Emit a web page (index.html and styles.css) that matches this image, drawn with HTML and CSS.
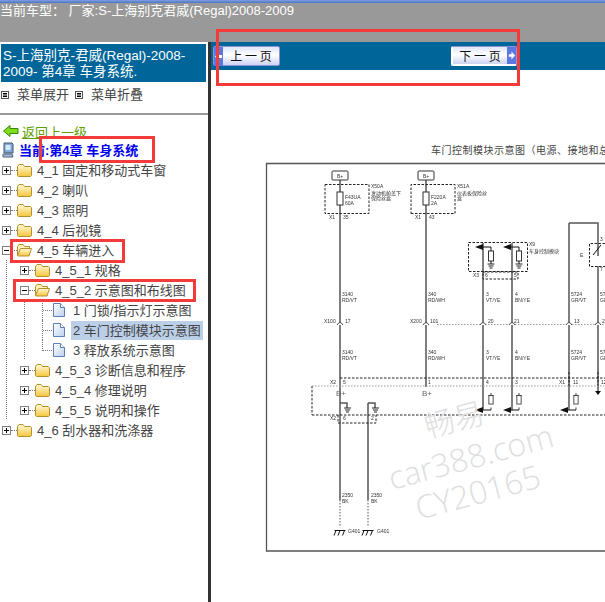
FILE: index.html
```html
<!DOCTYPE html>
<html lang="zh">
<head>
<meta charset="utf-8">
<title>车门控制模块示意图</title>
<link rel="stylesheet" href="styles.css">
</head>
<body>
<svg class="defs" width="0" height="0" aria-hidden="true">
  <defs>
    <linearGradient id="fg" x1="0" y1="0" x2="0" y2="1"><stop offset="0" stop-color="#fffbd8"/><stop offset="1" stop-color="#f4c640"/></linearGradient>
    <linearGradient id="dg" x1="0" y1="0" x2="1" y2="1"><stop offset="0" stop-color="#ffffff"/><stop offset="1" stop-color="#bcd0ee"/></linearGradient>
    <symbol id="plus" viewBox="0 0 9 9"><rect x=".5" y=".5" width="8" height="8" fill="#fff" stroke="#808080"/><path d="M2 4.5h5M4.5 2v5" stroke="#000"/></symbol>
    <symbol id="minus" viewBox="0 0 9 9"><rect x=".5" y=".5" width="8" height="8" fill="#fff" stroke="#808080"/><path d="M2 4.5h5" stroke="#000"/></symbol>
    <symbol id="folder" viewBox="0 0 15 14"><path d="M.5 3.5 2 1.500h4l1.500 2h6l1 1v8l-1 1h-12l-1-1z" fill="url(#fg)" stroke="#b98f2c"/></symbol>
    <symbol id="open" viewBox="0 0 15 14"><path d="M.5 12.500v-9l1.500-2h4l1.500 2h5v2h-8z" fill="#fff3b8" stroke="#b98f2c"/><path d="M.5 12.500l3-7h11l-2.500 7.500h-11z" fill="url(#fg)" stroke="#b98f2c"/></symbol>
    <symbol id="doc" viewBox="0 0 12 14"><path d="M.5.5h7l4 4v9h-11z" fill="url(#dg)" stroke="#5f7fb5"/><path d="M7.500.5v4h4" fill="#fff" stroke="#5f7fb5"/></symbol>
    <symbol id="fuse" viewBox="0 0 8 20"><path d="M4 0v3M1 3h6M4 17v3" stroke="#222" fill="none"/><rect x="1.500" y="3" width="5" height="10" fill="#fff" stroke="#333"/></symbol>
    <symbol id="gnd" viewBox="0 0 14 6"><path d="M1.500.5h11M3 .5 1 5.500M7 .5 5 5.500M11.500 .5l-2 5" stroke="#111" fill="none"/></symbol>
  </defs>
</svg>
<div class="page">
  <header class="topbar">
    <div class="stripe"></div>
    <div class="car">当前车型： 厂家:S-上海别克君威(Regal)2008-2009</div>
  </header>
  <div class="main">
    <aside class="side">
      <h1 class="crumb">S-上海别克-君威(Regal)-2008-2009- 第4章 车身系统.</h1>
      <div class="menu">
        <span class="menu-item"><svg class="mi" viewBox="0 0 8 8"><rect x=".5" y=".5" width="7" height="7" fill="#fff" stroke="#555"/><path d="M2 2.500h4M2 4h4M2 5.500h4" stroke="#000"/></svg>菜单展开</span>
        <span class="menu-item"><svg class="mi" viewBox="0 0 8 8"><rect x=".5" y=".5" width="7" height="7" fill="#fff" stroke="#555"/><path d="M2 2.500h4M2 4h4M2 5.500h4" stroke="#000"/></svg>菜单折叠</span>
      </div>
      <hr class="rule">
      <div class="back">
        <svg class="back-ic" viewBox="0 0 16 12"><path d="M.5 6 7 .5v3h8v5H7v3z" fill="#7fdc1e" stroke="#2f8a00"/></svg>
        <a class="back-link" href="#">返回上一级</a>
      </div>
      <div class="current">
        <svg class="pc" viewBox="0 0 12 16"><path d="M2 1h8l1 1v9H2z" fill="#7fa8dc" stroke="#456"/><rect x="3.500" y="3" width="5" height="5" fill="#d8e8fa"/><path d="M1 12h9l1 3H1z" fill="#9fb9d8" stroke="#567"/></svg>
        <span>当前:第4章 车身系统</span>
      </div>
      <ul class="tree">
        <li class="row"><svg class="exp"><use href="#plus"/></svg><i class="dots"></i><svg class="fold"><use href="#folder"/></svg><span class="lbl">4_1 固定和移动式车窗</span></li>
        <li class="row"><svg class="exp"><use href="#plus"/></svg><i class="dots"></i><svg class="fold"><use href="#folder"/></svg><span class="lbl">4_2 喇叭</span></li>
        <li class="row"><svg class="exp"><use href="#plus"/></svg><i class="dots"></i><svg class="fold"><use href="#folder"/></svg><span class="lbl">4_3 照明</span></li>
        <li class="row"><svg class="exp"><use href="#plus"/></svg><i class="dots"></i><svg class="fold"><use href="#folder"/></svg><span class="lbl">4_4 后视镜</span></li>
        <li class="row"><svg class="exp"><use href="#minus"/></svg><i class="dots"></i><svg class="fold"><use href="#open"/></svg><span class="lbl">4_5 车辆进入</span></li>
        <li class="row"><i class="guide"></i><svg class="exp"><use href="#plus"/></svg><i class="dots"></i><svg class="fold"><use href="#folder"/></svg><span class="lbl">4_5_1 规格</span></li>
        <li class="row"><i class="guide"></i><svg class="exp"><use href="#minus"/></svg><i class="dots"></i><svg class="fold"><use href="#open"/></svg><span class="lbl">4_5_2 示意图和布线图</span></li>
        <li class="row"><i class="guide"></i><i class="guide"></i><i class="elbow"></i><svg class="docic"><use href="#doc"/></svg><span class="lbl leaf">1 门锁/指示灯示意图</span></li>
        <li class="row"><i class="guide"></i><i class="guide"></i><i class="elbow"></i><svg class="docic"><use href="#doc"/></svg><span class="lbl leaf selected">2 车门控制模块示意图</span></li>
        <li class="row"><i class="guide"></i><i class="guide"></i><i class="elbow end"></i><svg class="docic"><use href="#doc"/></svg><span class="lbl leaf">3 释放系统示意图</span></li>
        <li class="row"><i class="guide"></i><svg class="exp"><use href="#plus"/></svg><i class="dots"></i><svg class="fold"><use href="#folder"/></svg><span class="lbl">4_5_3 诊断信息和程序</span></li>
        <li class="row"><i class="guide"></i><svg class="exp"><use href="#plus"/></svg><i class="dots"></i><svg class="fold"><use href="#folder"/></svg><span class="lbl">4_5_4 修理说明</span></li>
        <li class="row"><i class="guide"></i><svg class="exp"><use href="#plus"/></svg><i class="dots"></i><svg class="fold"><use href="#folder"/></svg><span class="lbl">4_5_5 说明和操作</span></li>
        <li class="row"><svg class="exp"><use href="#plus"/></svg><i class="dots"></i><svg class="fold"><use href="#folder"/></svg><span class="lbl">4_6 刮水器和洗涤器</span></li>
      </ul>
    </aside>
    <div class="divider"></div>
    <section class="content">
      <nav class="pager">
        <button class="pbtn prev"><svg class="parrow" viewBox="0 0 9 19"><rect width="9" height="19" fill="#5c78e0"/><path d="M1 9.500 5 5v3h3v3H5v3z" fill="#fff"/></svg><span>上 一 页</span></button>
        <button class="pbtn next"><span>下 一 页</span><svg class="parrow" viewBox="0 0 10 19"><rect width="10" height="19" fill="#5c78e0"/><path d="M9 9.500 5 5v3H2v3h3v3z" fill="#fff"/></svg></button>
      </nav>
      <svg class="diagram" viewBox="211 70 394 532" width="394" height="532">
        <text class="title" x="431" y="154">车门控制模块示意图（电源、接地和总线）</text>
        <g class="blurred">
          <path class="frame" d="M605 163.500H266.500V551H605"/>
          <g class="wire">
            <path d="M340 180V403M426 180V387M483 243V410M512 243V410M569 223V410M569 223H598V256M598 266V393M340 403V500M368 403V500"/>
            <path d="M340 403H347V408M368 403H375V408"/>
          </g>
          <rect class="bplus" x="332" y="171" width="16" height="9" rx="1"/>
          <rect class="bplus" x="418" y="171" width="16" height="9" rx="1"/>
          <g class="dash">
            <rect x="325" y="184.500" width="44" height="29"/>
            <path d="M411 213.500H455V184.500H411V213.500"/>
            <rect x="468.500" y="242.500" width="59" height="29"/>
            <rect x="483" y="272" width="35" height="7"/>
            <path d="M605 243.500H589.500V266.500H605"/>
            <path d="M340 378H605M312 415H605M312 386V415M338 415V423H376V415"/>
            <path d="M569 372V386M598 372V386"/>
          </g>
          <path class="dotline" d="M312 386H605"/>
          <path class="dotline" d="M437 324.500H605"/>
          <path class="dotline dark" d="M340 500V527M368 500V527"/>
          <g class="fuses">
            <rect x="337" y="192" width="6" height="13"/>
            <rect x="423" y="192" width="6" height="13"/>
            <rect x="488.500" y="251" width="5" height="10"/>
            <rect x="516.500" y="251" width="5" height="10"/>
            <use href="#fuse" x="487" y="393" width="8" height="17"/>
            <use href="#fuse" x="515" y="393" width="8" height="17"/>
            <use href="#fuse" x="572" y="393" width="8" height="17"/>
          </g>
          <g class="wire thin">
            <path d="M478 247H491V251M507 247H519V251M491 261V264M519 261V264M491 410H478M519 410H507M576 410H563M593 255 601 245"/>
          </g>
          <path class="blk" d="M475 247l8-3v6zM503 247l8-3v6zM475 410l8-3v6zM503 410l8-3v6zM560 410l8-3v6zM595 391h6l-3 4z"/>
          <g class="arch">
            <path d="M337 325q3-5 6 0M423 325q3-5 6 0M480 325q3-5 6 0M509 325q3-5 6 0M566 325q3-5 6 0M595 325q3-5 6 0"/>
          </g>
          <path class="earth" d="M344 408h7M345 410h5M346 412h3M372 408h7M373 410h5M374 412h3M487.500 264h7M488.500 266h5M489.500 268h3M515.500 264h7M516.500 266h5M517.500 268h3"/>
          <use href="#gnd" x="333" y="530" width="14" height="6"/>
          <use href="#gnd" x="361" y="530" width="14" height="6"/>
          <g class="tiny">
            <text x="337" y="178">B+</text><text x="423" y="178">B+</text>
            <text x="371" y="188">X50A</text><text x="371" y="195">发动机舱盖下</text><text x="371" y="200">保险丝盒</text>
            <text x="345" y="199">F43UA</text><text x="345" y="205">60A</text>
            <text x="431" y="199">F220A</text><text x="431" y="205">2A</text>
            <text x="457" y="188">X51A</text><text x="457" y="195">仪表板保险丝</text><text x="457" y="200">盒</text>
            <text x="329" y="219">X1</text><text x="343" y="219">35</text><text x="415" y="219">X1</text><text x="429" y="219">43</text>
            <text x="529" y="246">X9</text><text x="529" y="253">车身控制模块</text>
            <text x="473" y="277">X3</text><text x="485" y="277">6</text><text x="514" y="277">5</text>
            <text x="600" y="241">3</text><text x="600" y="271">7</text><text x="580" y="257">E</text>
            <text x="342" y="296">3140</text><text x="342" y="302">RD/VT</text>
            <text x="428" y="296">340</text><text x="428" y="302">RD/WH</text>
            <text x="486" y="296">3</text><text x="486" y="302">VT/YE</text>
            <text x="515" y="296">4</text><text x="515" y="302">BN/YE</text>
            <text x="571" y="296">5724</text><text x="571" y="302">GR/VT</text>
            <text x="600" y="296">5724</text><text x="600" y="302">GR/VT</text>
            <text x="324" y="323">X100</text><text x="345" y="323">17</text>
            <text x="410" y="323">X200</text><text x="430" y="323">101</text>
            <text x="488" y="323">20</text><text x="514" y="323">21</text><text x="574" y="323">13</text><text x="602" y="323">2</text>
            <text x="342" y="354">3140</text><text x="342" y="360">RD/VT</text>
            <text x="428" y="354">340</text><text x="428" y="360">RD/WH</text>
            <text x="486" y="354">3</text><text x="486" y="360">VT/YE</text>
            <text x="515" y="354">4</text><text x="515" y="360">BN/YE</text>
            <text x="571" y="354">5724</text><text x="571" y="360">GR/VT</text>
            <text x="600" y="354">5724</text><text x="600" y="360">GR/VT</text>
            <text x="330" y="384">X2</text><text x="343" y="384">5</text><text x="428" y="384">1</text>
            <text x="486" y="384">4</text><text x="515" y="384">3</text><text x="559" y="384">X1</text><text x="573" y="384">11</text><text x="601" y="384">12</text>
            <text x="330" y="420">X2</text><text x="343" y="420">6</text><text x="371" y="420">2</text>
            <text x="342" y="497">2350</text><text x="342" y="503">BK</text>
            <text x="371" y="497">2350</text><text x="371" y="503">BK</text>
            <text x="348" y="533">G401</text><text x="377" y="533">G401</text>
          </g>
          <text class="bp" x="336" y="396">B+</text><text class="bp" x="422" y="396">B+</text>
        </g>
        <g class="mark">
          <text class="wm-cn" transform="translate(428 438) rotate(-15)">畅易</text>
          <text class="wm" transform="translate(392 490) rotate(-15)">car388.com</text>
          <text class="wm" transform="translate(419 520) rotate(-15)">CY20165</text>
        </g>
      </svg>
    </section>
  </div>
  <div class="callout c-current"></div>
  <div class="callout c-45"></div>
  <div class="callout c-452"></div>
  <div class="callout c-pager"></div>
</div>
</body>
</html>
```

FILE: styles.css
```css
* { box-sizing: border-box; }
html, body { margin: 0; padding: 0; background: #fff; }
body { font-family: "Liberation Sans", "Noto Sans CJK SC", sans-serif; font-size: 13px; color: #333; }
.defs { position: absolute; }
.page { position: relative; width: 605px; height: 602px; overflow: hidden; display: flex; flex-direction: column; }

.topbar { height: 42px; background: #999; flex: none; }
.stripe { height: 3px; background: linear-gradient(#7f9ee0, #4f74c8); }
.car { color: #fff; font-size: 13px; line-height: 16px; white-space: pre; }

.main { flex: 1; display: flex; min-height: 0; }
.side { width: 208px; flex: none; padding-top: 2px; }
.divider { width: 3px; flex: none; background: #333; }
.content { flex: 1; min-width: 0; display: flex; flex-direction: column; }

.crumb { margin: 0 2px 0 1px; padding: 4px 2px 3px; height: 38px; background: #006699; color: #fff; font-size: 13.500px; font-weight: 400; line-height: 16px; }
.menu { display: flex; height: 31px; padding-top: 4px; line-height: 16px; }
.menu-item { display: flex; align-items: center; width: 74px; height: 18px; padding-left: 1px; color: #444; }
.mi { width: 8px; height: 8px; margin-right: 8px; flex: none; }
.rule { margin: 0; border: 0; height: 2px; background: #999; }

.back { display: flex; align-items: center; height: 20px; margin-top: 6px; padding-left: 3px; }
.back-ic { width: 16px; height: 12px; margin-right: 3px; }
.back-link { color: #5ca000; text-decoration: underline; }
.current { display: flex; align-items: center; height: 17px; padding-left: 2px; color: #0000ee; font-weight: 700; }
.pc { width: 12px; height: 16px; margin-right: 5px; flex: none; }

.tree { list-style: none; margin: 2px 0 0; padding: 0 0 0 2px; }
.row { display: flex; align-items: center; height: 20px; }
.exp { width: 9px; height: 9px; flex: none; }
.dots { width: 6px; height: 0; border-top: 1px dotted #777; flex: none; }
.fold { width: 15px; height: 14px; flex: none; margin-right: 5px; }
.lbl { white-space: nowrap; color: #444; line-height: 19px; }
.guide { width: 18px; height: 20px; flex: none; background: linear-gradient(#777 50%, transparent 50%) 4px 0 / 1px 2px repeat-y; }
.elbow { width: 15px; height: 20px; flex: none; margin-left: 4px; margin-right: -4px; border-left: 1px dotted #777; background: linear-gradient(90deg, #777 50%, transparent 50%) 0 10px / 2px 1px repeat-x; }
.elbow.end { height: 11px; margin-bottom: 9px; background-position: 0 10px; }
.docic { width: 12px; height: 14px; flex: none; margin-right: 8px; }
.leaf { padding: 0 2px; margin-left: -2px; }
.selected { background: #bccfe8; }

.pager { height: 28px; flex: none; background: #006699; display: flex; justify-content: space-between; padding: 4px 88px 0 2px; }
.pbtn { display: flex; align-items: center; height: 20px; padding: 0; margin: 0; border: 1px solid #8a96d8; border-radius: 2px; background: linear-gradient(#dfe4fb, #ffffff 45%, #cdd3f3); color: #111; font-family: "Noto Sans CJK SC", sans-serif; font-size: 12px; line-height: 1; }
.prev { width: 67px; }
.next { width: 66px; border-left: 2px solid #fff; border-bottom: 2px solid #fff; }
.pbtn span { flex: 1; text-align: center; }
.parrow { width: 9px; height: 19px; flex: none; }

.diagram { display: block; flex: none; }
.title { font-family: "Noto Sans CJK SC", sans-serif; font-size: 10px; letter-spacing: .5px; fill: #444; }
.blurred { filter: blur(.35px); }
.frame { fill: none; stroke: #555; stroke-width: 1.300; }
.wire path { fill: none; stroke: #555; stroke-width: 1.500; }
.wire.thin path { stroke: #111; stroke-width: 1; }
.bplus { fill: #fff; stroke: #333; stroke-width: 1; }
.dash rect, .dash path { fill: none; stroke: #222; stroke-width: 1; stroke-dasharray: 2.500 1.500; }
.dotline { fill: none; stroke: #999; stroke-width: 1; stroke-dasharray: 1.500 1.500; }
.dotline.dark { stroke: #555; }
.fuses rect { fill: #fff; stroke: #333; }
.blk { fill: #111; }
.arch path { fill: #fff; stroke: #444; }
.earth { fill: none; stroke: #222; }
.tiny text { font-family: "Liberation Sans", "Noto Sans CJK SC", sans-serif; font-size: 5px; fill: #333; }
.bp { font-size: 8px; fill: #666; }
.wm, .wm-cn { fill: #dedede; }
.wm { font-family: "Open Sans", sans-serif; font-size: 32px; font-weight: 300; }
.wm-cn { font-family: "Noto Sans CJK SC", sans-serif; font-size: 30px; font-weight: 300; }

.callout { position: absolute; border: 3px solid #f43b3b; pointer-events: none; }
.c-current { left: 39px; top: 136px; width: 116px; height: 27px; }
.c-45 { left: 10px; top: 239px; width: 115px; height: 24px; }
.c-452 { left: 13px; top: 279px; width: 183px; height: 23px; }
.c-pager { left: 216px; top: 29px; width: 304px; height: 57px; }
```
